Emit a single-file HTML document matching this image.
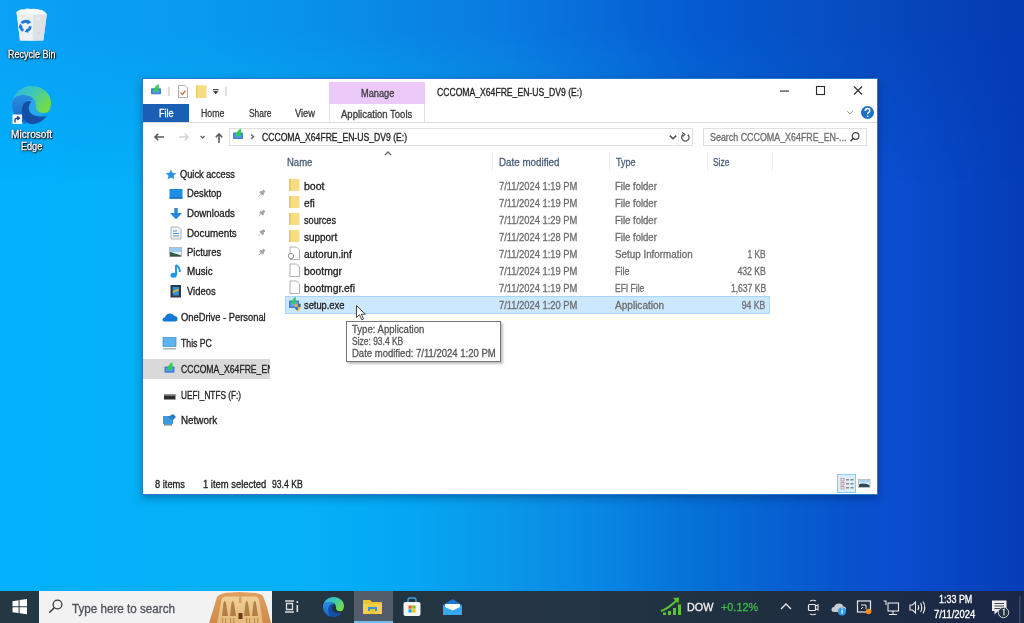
<!DOCTYPE html>
<html><head><meta charset="utf-8">
<style>
*{margin:0;padding:0;box-sizing:border-box}
html,body{width:1024px;height:623px;overflow:hidden}
body{position:relative;font-family:"Liberation Sans",sans-serif;
background:linear-gradient(90deg,#02b0fc 0%,#04b0f8 15%,#06b0f6 29.3%,#03a8f5 39%,#0a98e8 49.2%,#0886e4 58.6%,#0570d6 68.4%,#0852cc 83%,#0a4ed0 87%,#0746c4 93%,#053eb8 99%,#053db8 100%);}
#bgtop{position:absolute;left:0;top:0;width:1024px;height:591px;
background:linear-gradient(90deg,#0aa2f4 0%,#0a9ef3 8.2%,#089bef 19.5%,#0892ea 29.3%,#0a7be0 49.2%,#055ad0 68.4%,#074cc0 83%,#053cb4 98%,#053bb3 100%);
-webkit-mask-image:linear-gradient(180deg,#000 0px,#000 30px,transparent 180px);mask-image:linear-gradient(180deg,#000 0px,#000 30px,transparent 180px)}
.a{position:absolute}
.tx{position:absolute;white-space:nowrap;line-height:1;font-family:"Liberation Sans",sans-serif;-webkit-text-stroke:0.3px currentColor}
svg{position:absolute;overflow:visible}
#win{position:absolute;left:142px;top:78px;width:736px;height:417px;background:#fff;border:1px solid #2a78d0;box-shadow:0 3px 8px rgba(0,20,60,.35)}
#taskbar{position:absolute;left:0;top:591px;width:1024px;height:32px;background:linear-gradient(90deg,#233842 0%,#243442 50%,#223442 61%,#1f2f40 75%,#1d2a44 90%,#1b2748 100%)}
</style></head><body>

<div id="bgtop"></div>
<!-- ============ DESKTOP ICONS ============ -->
<!-- recycle bin -->
<svg style="left:14px;top:6px" width="36" height="38" viewBox="0 0 36 38">
  <path d="M2.5 5.9 L32.8 8.2 L29.3 34.5 L6 34.5 Z" fill="#e6eaee"/>
  <path d="M2.5 5.9 L19.9 8.8 L19.3 34.8 L6 34.5 Z" fill="#eef1f4"/>
  <path d="M19.4 8.8 L32.8 8.2 L29.3 34.5 L18.8 34.8 Z" fill="#dde2e7"/>
  <path d="M2.5 5.9 Q6 2.5 10 3.5 Q13 1.8 17 3 Q22 2 26 3.8 Q30 4 32.8 8.2 L19.4 8.8 Z" fill="#f8f9fa"/>
  <circle cx="9" cy="10" r="1.6" fill="#e2e6ea"/><circle cx="15" cy="12.5" r="1.5" fill="#e4e8ec"/><circle cx="24" cy="13" r="1.8" fill="#e8ecef"/>
  <circle cx="8" cy="28" r="1.2" fill="#e4e8ec"/><circle cx="25" cy="27" r="1.5" fill="#d2d8de"/>
  <g stroke="#1f78d6" stroke-width="2.8" fill="none"><path d="M7.6 17.3 A4.8 4.8 0 0 1 14.6 16.4"/><path d="M16.2 20.3 A4.8 4.8 0 0 1 12.2 24.9"/><path d="M9.4 24.4 A4.8 4.8 0 0 1 6.6 20"/></g>
  <g fill="#1f78d6"><path d="M13.6 13.6 L17.4 16.6 L13.3 18.2 Z"/><path d="M14.6 26.8 L10.6 25.8 L13.2 22.4 Z"/><path d="M4.6 22 L6 17.6 L8.6 20.6 Z"/></g>
</svg>
<!-- edge desktop -->
<svg style="left:12px;top:86px" width="39" height="38" viewBox="0 0 40 40" preserveAspectRatio="none">
  <defs>
    <linearGradient id="eg1" x1="0" y1="0" x2="1" y2="0.6"><stop offset="0" stop-color="#2fb4ea"/><stop offset="0.5" stop-color="#3cc8b8"/><stop offset="1" stop-color="#74dc48"/></linearGradient>
    <linearGradient id="eg2" x1="0" y1="0" x2="0" y2="1"><stop offset="0" stop-color="#2a8ee0"/><stop offset="1" stop-color="#1466c4"/></linearGradient>
  </defs>
  <g id="edgelogo">
  <path d="M0 19 C1 8 10 0 20 0 C32 0 40 9 40 17 C40 23 38 27 36 28 C31 29 26 28 24.5 25 C23.5 22 24 19 22 17 L12 12 Z" fill="url(#eg1)"/>
  <path d="M14 11 C21 10 25 15 24.5 20 C24.3 25 27 28.5 33 29.5 C27 33 21 31 18 27 C15 23 13.5 17 14 11 Z" fill="#2aa6ee"/>
  <path d="M0 19 C0 12 6 9.5 12 9.5 C17 9.5 21 12 21.5 15 C18 14 13.5 15.5 12 19 C10 24 11 32 15 40 C6 37 0 29 0 19 Z" fill="url(#eg2)"/>
  <path d="M12 18.5 C14 15.5 18 15 20 16.5 C16.5 20 16.5 25 19 28.5 C22 32 28 33 35.5 31.5 C32 37 26 40 20 40 C14 40 10.5 34 10.2 28 C10 24 10.5 21 12 18.5 Z" fill="#1650a6"/>
  </g>
</svg>
<svg style="left:12px;top:114px" width="11" height="11" viewBox="0 0 11 11">
  <rect x="0.5" y="0.5" width="9.5" height="9.5" fill="#fff"/>
  <path d="M3 8.5 L3 6 Q3 4.2 5 4.2 L6.5 4.2 M5.2 2.4 L7.4 4.2 L5.2 6" stroke="#1a4a98" stroke-width="1.4" fill="none"/>
</svg>
<!-- ============ WINDOW ============ -->
<div id="win"></div>
<!-- QAT -->
<svg style="left:150px;top:84px" width="80" height="15" viewBox="0 0 80 15">
  <rect x="1" y="4.3" width="10" height="6" rx="0.8" fill="#3f7fd4"/><rect x="2.5" y="6" width="7" height="3" fill="#5a9ae6"/>
  <path d="M3.6 7.5 Q3.8 3 8.6 0 Q9.4 5 7.2 8 Z" fill="#2fcf4a"/>
  <rect x="18.5" y="3" width="0.9" height="9" fill="#b8b8b8"/>
  <path d="M28.5 1.5 L35 1.5 L37.5 4 L37.5 13.5 L28.5 13.5 Z" fill="#fff" stroke="#9a9a9a" stroke-width="0.8"/>
  <path d="M30.5 8.5 L32.5 10.5 L35.5 6.5" stroke="#e27040" stroke-width="1.3" fill="none"/>
  <rect x="46" y="1.3" width="10.5" height="12.7" fill="#f6dc84"/>
  <rect x="46" y="1.3" width="1.5" height="12.7" fill="#eccc66"/>
  <rect x="63" y="5.2" width="5.5" height="1" fill="#222"/>
  <path d="M63 7.2 L68.5 7.2 L65.75 10 Z" fill="#222"/>
  <rect x="75.5" y="3" width="0.9" height="9" fill="#b8b8b8"/>
</svg>
<!-- manage contextual tab -->
<div class="a" style="left:329px;top:82px;width:96px;height:22px;background:#ebc9f8"></div>
<div class="a" style="left:329px;top:104px;width:96px;height:19px;background:#fff;border-left:1px solid #e2e2e2;border-right:1px solid #e2e2e2"></div>
<!-- File tab -->
<div class="a" style="left:143px;top:104px;width:46px;height:18px;background:#1a5fb4"></div>
<!-- ribbon bottom line -->
<div class="a" style="left:143px;top:122px;width:734px;height:1px;background:#dadbdc"></div>
<!-- window controls -->
<svg style="left:776px;top:84px" width="92" height="14" viewBox="0 0 92 14">
  <rect x="4" y="6.5" width="9" height="1.1" fill="#2b2b2b"/>
  <rect x="40.5" y="2.5" width="8" height="8" fill="none" stroke="#2b2b2b" stroke-width="1.1"/>
  <path d="M78 2.5 L86 10.5 M86 2.5 L78 10.5" stroke="#2b2b2b" stroke-width="1.1"/>
</svg>
<!-- chevron + help -->
<svg style="left:845px;top:105px" width="32" height="16" viewBox="0 0 32 16">
  <path d="M2 6 L5 9 L8 6" stroke="#a8a8a8" stroke-width="1" fill="none"/>
  <circle cx="22.5" cy="7.5" r="6.5" fill="#1b6ec9"/>
  <path d="M20.3 6 Q20.3 3.6 22.6 3.6 Q24.8 3.6 24.8 5.6 Q24.8 6.8 23.5 7.5 Q22.6 8 22.6 9.3" stroke="#fff" stroke-width="1.5" fill="none"/>
  <circle cx="22.6" cy="11.3" r="0.9" fill="#fff"/>
</svg>
<!-- nav buttons -->
<svg style="left:150px;top:129px" width="80" height="16" viewBox="0 0 80 16">
  <path d="M5 8 L14 8 M8.2 4.8 L5 8 L8.2 11.2" stroke="#5a5a5a" stroke-width="1.6" fill="none"/>
  <path d="M29 8 L38 8 M34.8 4.8 L38 8 L34.8 11.2" stroke="#d4d4d4" stroke-width="1.6" fill="none"/>
  <path d="M50.6 7 L52.6 9 L54.6 7" stroke="#6a6a6a" stroke-width="1.5" fill="none"/>
  <path d="M69 5 L69 14 M65.8 8.2 L69 5 L72.2 8.2" stroke="#5a5a5a" stroke-width="1.6" fill="none"/>
</svg>
<!-- address box -->
<div class="a" style="left:229px;top:128px;width:464px;height:18px;border:1px solid #e0e0e0"></div>
<div class="a" style="left:678px;top:129px;width:1px;height:16px;background:#ececec"></div>
<svg style="left:232px;top:129px" width="460" height="16" viewBox="0 0 460 16">
  <rect x="1" y="3.6" width="10" height="6.4" rx="0.8" fill="#3f7fd4"/><rect x="2.5" y="5.3" width="7" height="3.2" fill="#5a9ae6"/>
  <path d="M3.8 6.9 Q4 2.4 8.8 -0.6 Q9.6 4.4 7.4 7.4 Z" fill="#2fcf4a"/>
  <path d="M19 5.6 L21.6 7.8 L19 10" stroke="#606060" stroke-width="1.3" fill="none"/>
  <path d="M437.8 6.6 L441 9.8 L444.2 6.6" stroke="#505050" stroke-width="1.5" fill="none"/>
  <path d="M455.8 5.6 A3.7 3.7 0 1 1 451.2 5.4" stroke="#606060" stroke-width="1.4" fill="none"/>
  <path d="M450.2 3.4 L452.8 5.3 L450.6 7.6" stroke="#606060" stroke-width="1.3" fill="none"/>
</svg>
<!-- search box -->
<div class="a" style="left:703px;top:128px;width:164px;height:18px;border:1px solid #e0e0e0"></div>
<svg style="left:849px;top:131px" width="12" height="12" viewBox="0 0 12 12">
  <circle cx="6.6" cy="5" r="3.3" stroke="#404040" stroke-width="1.2" fill="none"/>
  <path d="M4.2 7.5 L1.5 10.3" stroke="#404040" stroke-width="1.5"/>
</svg>
<!-- column separators & sort arrow -->
<div class="a" style="left:492px;top:152px;width:1px;height:19px;background:#ececec"></div>
<div class="a" style="left:609px;top:152px;width:1px;height:19px;background:#ececec"></div>
<div class="a" style="left:707px;top:152px;width:1px;height:19px;background:#ececec"></div>
<div class="a" style="left:772px;top:152px;width:1px;height:19px;background:#ececec"></div>
<svg style="left:383px;top:150px" width="10" height="7" viewBox="0 0 10 7">
  <path d="M2 5 L5 2 L8 5" stroke="#6a6a6a" stroke-width="1.4" fill="none"/>
</svg>

<!-- selected row -->
<div class="a" style="left:285px;top:296px;width:485px;height:18px;background:#cce8ff;border:1px solid #a8d4fa"></div>
<!-- nav selected -->
<div class="a" style="left:143px;top:359px;width:127px;height:20px;background:#d9d9d9"></div>

<!-- file icons -->
<svg style="left:287px;top:177px" width="16" height="140" viewBox="0 0 16 140">
  <g fill="#f8dd86"><rect x="2" y="2" width="10.5" height="12"/><rect x="2" y="19" width="10.5" height="12"/><rect x="2" y="36" width="10.5" height="12"/><rect x="2" y="53" width="10.5" height="12"/></g>
  <g fill="#ecca62"><rect x="2" y="2" width="2" height="12"/><rect x="2" y="19" width="2" height="12"/><rect x="2" y="36" width="2" height="12"/><rect x="2" y="53" width="2" height="12"/></g>
  <g fill="#fff" stroke="#9a9a9a" stroke-width="0.8">
    <path d="M3 70 L9.5 70 L12.5 73 L12.5 82.5 L3 82.5 Z"/>
    <path d="M3 87 L9.5 87 L12.5 90 L12.5 99.5 L3 99.5 Z"/>
    <path d="M3 104 L9.5 104 L12.5 107 L12.5 116.5 L3 116.5 Z"/>
  </g>
  <circle cx="4" cy="79" r="2.6" fill="#fff" stroke="#8a8a8a" stroke-width="0.9"/>
  <g>
    <rect x="2" y="123.5" width="10" height="7.5" rx="0.6" fill="#3f7fd4"/><rect x="3.5" y="125" width="7" height="4.5" fill="#6aa4e8"/>
    <path d="M4.6 126.5 Q4.8 122 8.6 119.5 Q9.6 124 7.8 127 Z" fill="#2fcf4a"/>
    <path d="M7.8 126.8 L13.6 126.8 L13.6 130 Q13.6 132.8 10.7 134 Q7.8 132.8 7.8 130 Z" fill="#e8b830"/>
    <path d="M10.7 126.8 L13.6 126.8 L13.6 130 L10.7 130 Z M7.8 130 L10.7 130 L10.7 134 Q7.8 132.8 7.8 130 Z" fill="#3a6cc0"/>
  </g>
</svg>

<!-- tooltip -->
<div class="a" style="left:346px;top:321px;width:155px;height:41px;background:#fff;border:1px solid #767676;box-shadow:2px 2px 2px rgba(0,0,0,.25)"></div>
<!-- cursor -->
<svg style="left:356px;top:305px" width="12" height="17" viewBox="0 0 12 17">
  <path d="M0.5 0.5 L0.5 12.5 L3.5 9.8 L5.8 14.8 L7.6 14 L5.4 9.2 L9.4 9.2 Z" fill="#fff" stroke="#333" stroke-width="0.9" stroke-linejoin="round"/>
</svg>

<!-- nav icons -->
<svg style="left:160px;top:166px" width="112" height="264" viewBox="0 0 112 264">
  <!-- star (quick access) y~174 -> 8 -->
  <path d="M11 3.5 L12.6 6.9 L16.3 7.2 L13.5 9.7 L14.4 13.3 L11 11.4 L7.6 13.3 L8.5 9.7 L5.7 7.2 L9.4 6.9 Z" fill="#2b8fe0"/>
  <!-- desktop y~193.5 -> 27.5 -->
  <rect x="9.5" y="23" width="13" height="9.5" fill="#1d8fe2"/>
  <rect x="9.5" y="31.5" width="13" height="1.2" fill="#0f67b8"/>
  <!-- downloads 213 -> 47 -->
  <rect x="14.3" y="42" width="3.4" height="6" fill="#2a86dc"/><path d="M10 47 L22 47 L16 53.5 Z" fill="#2a86dc"/>
  <!-- pins -->
  <g fill="#a4a4a4" stroke="#a4a4a4" stroke-width="0.9">
    <path d="M103.5 24 L101.8 25.7 L100.6 25.3 L99.9 26.6 L102.4 29.1 L103.7 28.4 L103.3 27.2 L105 25.5 Z M100.6 28.4 L98.6 30.4"/>
    <path d="M103.5 44 L101.8 45.7 L100.6 45.3 L99.9 46.6 L102.4 49.1 L103.7 48.4 L103.3 47.2 L105 45.5 Z M100.6 48.4 L98.6 50.4"/>
    <path d="M103.5 63.5 L101.8 65.2 L100.6 64.8 L99.9 66.1 L102.4 68.6 L103.7 67.9 L103.3 66.7 L105 65 Z M100.6 67.9 L98.6 69.9"/>
    <path d="M103.5 83 L101.8 84.7 L100.6 84.3 L99.9 85.6 L102.4 88.1 L103.7 87.4 L103.3 86.2 L105 84.5 Z M100.6 87.4 L98.6 89.4"/>
  </g>
  <!-- documents 233 -> 67 -->
  <path d="M11 61 L18.5 61 L21 63.5 L21 73 L11 73 Z" fill="#f4f4f4" stroke="#a0a0a0" stroke-width="0.8"/>
  <path d="M13 65 L17 65 M13 67.5 L19 67.5 M13 70 L19 70" stroke="#3a8ad8" stroke-width="0.9"/>
  <!-- pictures 252 -> 86 -->
  <rect x="9.5" y="81.5" width="12" height="9" fill="#e8eef4" stroke="#9aa4ae" stroke-width="0.7"/>
  <rect x="10" y="82" width="11" height="4" fill="#9ccaf0"/>
  <path d="M10 86 Q14 87 21 89.5 L21 90.5 L10 90.5 Z" fill="#2e5a44"/>
  <!-- music 271 -> 105 -->
  <path d="M16 99 L16 109" stroke="#1e96ee" stroke-width="1.9"/>
  <ellipse cx="13.6" cy="109.2" rx="3.1" ry="2.5" fill="#1e96ee"/>
  <path d="M16 99 Q20 101.5 19.8 106" stroke="#1e96ee" stroke-width="1.9" fill="none"/>
  <!-- videos 291 -> 125 -->
  <rect x="10.5" y="119" width="10.5" height="12.5" fill="#2c3a4a"/>
  <rect x="12.8" y="121" width="6" height="8.5" fill="#3a8fd8"/>
  <path d="M12.8 125 L18.8 122.5 L18.8 124.5 L12.8 127 Z" fill="#d8b040"/>
  <!-- onedrive 317 -> 151 -->
  <path d="M4 155.5 Q2.5 155.5 2.5 153.5 Q2.5 151.5 5 151.3 Q6 147.5 10 147.5 Q13 147.5 14.5 150 Q17.5 150 17.5 153 Q17.5 155.5 15 155.5 Z" fill="#1479d6"/>
  <!-- this pc 342.6 -> 176.6 -->
  <rect x="3" y="171.5" width="13" height="9" fill="#5cb4f0" stroke="#3a8ed0" stroke-width="0.7"/>
  <rect x="3" y="182" width="13" height="1.5" fill="#a8b4c0"/>
  <!-- cccoma 369 -> 203 -->
  <rect x="4.5" y="200.5" width="10" height="6.2" rx="0.8" fill="#3f7fd4"/><rect x="6" y="202.2" width="7" height="3" fill="#5a9ae6"/>
  <path d="M7.3 203.7 Q7.5 199.2 12.3 196.2 Q13.1 201.2 10.9 204.2 Z" fill="#2fcf4a"/>
  <!-- uefi 395 -> 229 -->
  <rect x="4" y="228.5" width="11.5" height="5" fill="#2c2c2c"/>
  <rect x="4" y="228.5" width="11.5" height="1.3" fill="#8a8a8a"/>
  <!-- network 420 -> 254 -->
  <rect x="3" y="250" width="10" height="8" fill="#3c9ae0"/>
  <path d="M8 251 L13 248 L16 251 L13 254 Z" fill="#2a78c8"/>
  <rect x="4" y="258" width="8" height="1.5" fill="#7a8a9a"/>
</svg>

<!-- view buttons -->
<div class="a" style="left:837px;top:474px;width:19px;height:19px;background:#dcefff;border:1px solid #8ccaf6"></div>
<svg style="left:838px;top:475px" width="34" height="17" viewBox="0 0 34 17">
  <g fill="#8a8a8a"><rect x="8" y="4" width="3" height="1.5"/><rect x="12.5" y="4" width="3" height="1.5"/><rect x="8" y="8" width="3" height="1.5"/><rect x="12.5" y="8" width="3" height="1.5"/><rect x="8" y="12" width="3" height="1.5"/><rect x="12.5" y="12" width="3" height="1.5"/></g>
  <g fill="none" stroke="#c88a8a" stroke-width="0.8"><rect x="3" y="3.5" width="3" height="2.5"/><rect x="3" y="7.5" width="3" height="2.5"/><rect x="3" y="11.5" width="3" height="2.5"/></g>
  <rect x="20.5" y="4.5" width="11.5" height="8" fill="#eef2f4" stroke="#a8a8a8" stroke-width="0.7"/>
  <rect x="21" y="5" width="10.5" height="2.5" fill="#a8d4f4"/>
  <path d="M21 9.5 Q24 7.5 31.5 10 L31.5 12 L21 12 Z" fill="#2a4a5a"/>
</svg>

<!-- ============ TASKBAR ============ -->
<div id="taskbar"></div>
<svg style="left:12px;top:599px" width="16" height="16" viewBox="0 0 16 16">
  <path d="M0.5 2.2 L6.6 1.3 L6.6 7.2 L0.5 7.2 Z M7.6 1.1 L15 0 L15 7.2 L7.6 7.2 Z M0.5 8.2 L6.6 8.2 L6.6 14.1 L0.5 13.2 Z M7.6 8.2 L15 8.2 L15 15.3 L7.6 14.3 Z" fill="#fff"/>
</svg>
<div class="a" style="left:39px;top:591px;width:233px;height:32px;background:#f2f2f2"></div>
<svg style="left:47px;top:598px" width="18" height="18" viewBox="0 0 18 18">
  <circle cx="10.5" cy="6.5" r="4.4" stroke="#3a3a3a" stroke-width="1.3" fill="none"/>
  <path d="M7.3 9.7 L2.3 14.7" stroke="#3a3a3a" stroke-width="1.5"/>
</svg>
<!-- abu simbel image -->
<svg style="left:208px;top:591px" width="64" height="32" viewBox="0 0 64 32">
  <defs><linearGradient id="as" x1="0" y1="0" x2="0" y2="1"><stop offset="0" stop-color="#e0a060"/><stop offset="1" stop-color="#d08a4a"/></linearGradient>
  <linearGradient id="as2" x1="0" y1="0" x2="0" y2="1"><stop offset="0" stop-color="#f0d098"/><stop offset="1" stop-color="#e4b878"/></linearGradient></defs>
  <path d="M1 32 L6 16 L9 6 Q12 1.5 24 1.5 Q30 0.5 40 1.5 Q51 1.5 55 5 L59 16 L63 32 Z" fill="url(#as)"/>
  <path d="M9 32 L13.5 9 Q14 5.5 18 5.5 L47 5.5 Q50.5 5.5 51 9 L55 32 Z" fill="url(#as2)"/>
  <g fill="#a8743c" opacity="0.85">
    <path d="M14 25 L15.5 12 Q16.5 8 18 12 L20 25 Z"/><path d="M22 25 L23.5 12 Q24.8 8 26 12 L28 25 Z"/>
    <path d="M36 25 L37.5 12 Q38.8 8 40 12 L42 25 Z"/><path d="M44 25 L45.5 12 Q46.8 8 48 12 L50 25 Z"/>
  </g>
  <g fill="#b88040" opacity="0.7"><rect x="14" y="27" width="1.2" height="5"/><rect x="17" y="27" width="1.2" height="5"/><rect x="22" y="27" width="1.2" height="5"/><rect x="25" y="27" width="1.2" height="5"/><rect x="38" y="27" width="1.2" height="5"/><rect x="41" y="27" width="1.2" height="5"/><rect x="46" y="27" width="1.2" height="5"/><rect x="49" y="27" width="1.2" height="5"/></g>
  <rect x="30.5" y="22" width="4" height="6" fill="#6a3a18"/>
  <path d="M31 5.5 L33.5 5.5 L33.5 12 L31 12 Z" fill="#c89050" opacity="0.7"/>
</svg>
<!-- task view -->
<svg style="left:283px;top:599px" width="18" height="16" viewBox="0 0 18 16">
  <path d="M2 2 L11 2 M2 13 L11 13 M3.5 4.5 L9.5 4.5 L9.5 10.5 L3.5 10.5 Z" stroke="#dcdcdc" stroke-width="1.3" fill="none"/>
  <rect x="13.5" y="2" width="1.6" height="2" fill="#dcdcdc"/><rect x="13.5" y="6" width="1.6" height="7" fill="#dcdcdc"/>
</svg>
<!-- edge taskbar -->
<svg style="left:323px;top:597px" width="21" height="20" viewBox="0 0 40 40" preserveAspectRatio="none">
  <path d="M0 19 C1 8 10 0 20 0 C32 0 40 9 40 17 C40 23 38 27 36 28 C31 29 26 28 24.5 25 C23.5 22 24 19 22 17 L12 12 Z" fill="url(#eg1)"/>
  <path d="M14 11 C21 10 25 15 24.5 20 C24.3 25 27 28.5 33 29.5 C27 33 21 31 18 27 C15 23 13.5 17 14 11 Z" fill="#233442"/>
  <path d="M0 19 C0 12 6 9.5 12 9.5 C17 9.5 21 12 21.5 15 C18 14 13.5 15.5 12 19 C10 24 11 32 15 40 C6 37 0 29 0 19 Z" fill="url(#eg2)"/>
  <path d="M12 18.5 C14 15.5 18 15 20 16.5 C16.5 20 16.5 25 19 28.5 C22 32 28 33 35.5 31.5 C32 37 26 40 20 40 C14 40 10.5 34 10.2 28 C10 24 10.5 21 12 18.5 Z" fill="#1650a6"/>
</svg>
<!-- explorer active -->
<div class="a" style="left:354px;top:591px;width:39px;height:32px;background:#525d69"></div>
<div class="a" style="left:354px;top:621px;width:39px;height:2px;background:#76b9ed"></div>
<svg style="left:362px;top:599px" width="22" height="16" viewBox="0 0 22 16">
  <path d="M1 1 L8 1 L10 3 L20 3 L20 15 L1 15 Z" fill="#f0c23a"/>
  <rect x="1" y="5" width="19" height="10" fill="#f8d04a"/>
  <rect x="6" y="8" width="9" height="4" fill="#3a8ee0"/>
  <rect x="8" y="10" width="5" height="5" fill="#f0c23a"/>
</svg>
<!-- store -->
<svg style="left:402px;top:597px" width="20" height="20" viewBox="0 0 20 20">
  <path d="M6 5 L6 3 Q6 1 8 1 L12 1 Q14 1 14 3 L14 5" stroke="#3aa0e8" stroke-width="1.4" fill="none"/>
  <rect x="1.5" y="5" width="17" height="14" rx="2" fill="#f4f4f4"/>
  <rect x="6.5" y="8.5" width="3.2" height="3.2" fill="#f25022"/><rect x="10.3" y="8.5" width="3.2" height="3.2" fill="#7fba00"/>
  <rect x="6.5" y="12.3" width="3.2" height="3.2" fill="#00a4ef"/><rect x="10.3" y="12.3" width="3.2" height="3.2" fill="#ffb900"/>
</svg>
<!-- mail -->
<svg style="left:442px;top:598px" width="21" height="18" viewBox="0 0 21 18">
  <path d="M1 7 L10.5 1 L20 7 L20 17 L1 17 Z" fill="#1a78d4"/>
  <path d="M1 7 L10.5 12 L20 7 L20 17 L1 17 Z" fill="#34a8f0"/>
  <path d="M3 6 L18 6 L18 9 L10.5 12.5 L3 9 Z" fill="#fff"/>
</svg>
<!-- stock widget -->
<svg style="left:660px;top:596px" width="22" height="20" viewBox="0 0 22 20">
  <path d="M1 15 Q8 13 18 3" stroke="#5cc42e" stroke-width="2" fill="none"/>
  <path d="M13 2 L19 1.5 L18.5 7.5 Z" fill="#5cc42e"/>
  <rect x="3" y="16.5" width="3" height="2.5" fill="#5cc42e"/><rect x="8" y="15" width="3" height="4" fill="#5cc42e"/>
  <rect x="13" y="12" width="3" height="7" fill="#5cc42e"/><rect x="18" y="8.5" width="3" height="10.5" fill="#5cc42e"/>
</svg>
<!-- tray -->
<svg style="left:776px;top:596px" width="248" height="27" viewBox="0 0 248 27">
  <path d="M5 13 L10 8 L15 13" stroke="#e8e8e8" stroke-width="1.3" fill="none"/>
  <!-- meet -->
  <path d="M34 5 Q37 3.5 40 5 M34 18 Q37 19.5 40 18" stroke="#dcdcdc" stroke-width="1.1" fill="none"/>
  <rect x="32.5" y="8.5" width="7" height="6" rx="1" stroke="#e8e8e8" stroke-width="1.2" fill="none"/>
  <path d="M39.5 10 L42 8.8 L42 14 L39.5 12.8" stroke="#e8e8e8" stroke-width="1.1" fill="none"/>
  <!-- onedrive -->
  <path d="M58 16 Q55.5 16 55.5 13.5 Q55.5 11 58 11 Q59 7.5 63 7.5 Q66.5 7.5 67.5 10.5 Q70 10.5 70 13 Q70 16 67 16 Z" fill="#c8ccd0"/>
  <circle cx="66" cy="15.5" r="4" fill="#2a9ae8"/>
  <rect x="65.5" y="14" width="1.2" height="3.8" fill="#fff"/><rect x="65.5" y="12.3" width="1.2" height="1" fill="#fff"/>
  <!-- security / presentation -->
  <rect x="81.5" y="5" width="13" height="11" stroke="#e8e8e8" stroke-width="1.2" fill="none"/>
  <path d="M85 9 L90 9 L90 13 M85 13 L87 11" stroke="#e8e8e8" stroke-width="1" fill="none"/>
  <circle cx="92.5" cy="15.5" r="2.8" fill="#f7901e"/>
  <!-- network -->
  <rect x="112" y="7" width="10.5" height="8" stroke="#e8e8e8" stroke-width="1.1" fill="none"/>
  <path d="M117 15 L117 18 M113 18.5 L121 18.5 M107.5 5 L110 5 L110 9" stroke="#e8e8e8" stroke-width="1.1" fill="none"/>
  <!-- volume -->
  <path d="M134 9 L136.5 9 L139.5 6 L139.5 17 L136.5 14 L134 14 Z" stroke="#e8e8e8" stroke-width="1.1" fill="none"/>
  <path d="M142 9 Q143.5 11.5 142 14 M144.5 7 Q147 11.5 144.5 16 M147 5.5 Q150.5 11.5 147 17.5" stroke="#e8e8e8" stroke-width="1.1" fill="none"/>
  <!-- notification -->
  <path d="M216 4.5 L230.5 4.5 L230.5 15 L222 15 L218.5 18.5 L218.5 15 L216 15 Z" fill="#f0f0f0"/>
  <path d="M218.5 7.5 L228 7.5 M218.5 10 L228 10 M218.5 12.5 L225 12.5" stroke="#233341" stroke-width="0.9"/>
  <circle cx="227.5" cy="16.5" r="5.2" fill="#233341" stroke="#d0d0d0" stroke-width="1"/>
  <path d="M226.8 14 L228 13.2 L228 19.5" stroke="#f0f0f0" stroke-width="1.1" fill="none"/>
  <rect x="243.5" y="0" width="0.8" height="27" fill="#5a6672"/>
</svg>

<div class="tx" style="left:8.10px;top:49.91px;font-size:10px;color:#fff;transform:scaleX(0.8994);transform-origin:left;text-shadow:0 0 1px #000,0 0 2px rgba(0,0,0,.9),1px 1px 1px #000,0 1px 3px rgba(0,0,0,.6);">Recycle Bin</div>
<div class="tx" style="left:10.90px;top:129.92px;font-size:10px;color:#fff;transform:scaleX(1.0133);transform-origin:left;text-shadow:0 0 1px #000,0 0 2px rgba(0,0,0,.9),1px 1px 1px #000,0 1px 3px rgba(0,0,0,.6);">Microsoft</div>
<div class="tx" style="left:20.50px;top:141.52px;font-size:10px;color:#fff;transform:scaleX(0.9076);transform-origin:left;text-shadow:0 0 1px #000,0 0 2px rgba(0,0,0,.9),1px 1px 1px #000,0 1px 3px rgba(0,0,0,.6);">Edge</div>
<div class="tx" style="left:360.50px;top:88.91px;font-size:10px;color:#3b3b3b;transform:scaleX(0.9242);transform-origin:left;">Manage</div>
<div class="tx" style="left:436.70px;top:88.11px;font-size:10px;color:#1e1e1e;transform:scaleX(0.8612);transform-origin:left;">CCCOMA_X64FRE_EN-US_DV9 (E:)</div>
<div class="tx" style="left:158.60px;top:109.41px;font-size:10px;color:#ffffff;transform:scaleX(0.9116);transform-origin:left;">File</div>
<div class="tx" style="left:200.60px;top:109.41px;font-size:10px;color:#3b3b3b;transform:scaleX(0.8768);transform-origin:left;">Home</div>
<div class="tx" style="left:248.50px;top:109.41px;font-size:10px;color:#3b3b3b;transform:scaleX(0.8431);transform-origin:left;">Share</div>
<div class="tx" style="left:295.00px;top:109.41px;font-size:10px;color:#3b3b3b;transform:scaleX(0.9302);transform-origin:left;">View</div>
<div class="tx" style="left:341.00px;top:109.51px;font-size:10px;color:#3b3b3b;transform:scaleX(0.9523);transform-origin:left;">Application Tools</div>
<div class="tx" style="left:262.00px;top:132.92px;font-size:10px;color:#1e1e1e;transform:scaleX(0.8612);transform-origin:left;">CCCOMA_X64FRE_EN-US_DV9 (E:)</div>
<div class="tx" style="left:710.20px;top:132.92px;font-size:10px;color:#6d6d6d;transform:scaleX(0.8892);transform-origin:left;">Search CCCOMA_X64FRE_EN-...</div>
<div class="tx" style="left:287.40px;top:157.92px;font-size:10px;color:#4c607a;transform:scaleX(0.9518);transform-origin:left;">Name</div>
<div class="tx" style="left:498.70px;top:157.92px;font-size:10px;color:#4c607a;transform:scaleX(0.9805);transform-origin:left;">Date modified</div>
<div class="tx" style="left:615.50px;top:157.92px;font-size:10px;color:#4c607a;transform:scaleX(0.8991);transform-origin:left;">Type</div>
<div class="tx" style="left:712.90px;top:157.92px;font-size:10px;color:#4c607a;transform:scaleX(0.8379);transform-origin:left;">Size</div>
<div class="tx" style="left:180.00px;top:169.92px;font-size:10px;color:#1e1e1e;transform:scaleX(0.9249);transform-origin:left;">Quick access</div>
<div class="tx" style="left:186.70px;top:189.42px;font-size:10px;color:#1e1e1e;transform:scaleX(0.9431);transform-origin:left;">Desktop</div>
<div class="tx" style="left:186.70px;top:209.22px;font-size:10px;color:#1e1e1e;transform:scaleX(0.9680);transform-origin:left;">Downloads</div>
<div class="tx" style="left:186.70px;top:228.72px;font-size:10px;color:#1e1e1e;transform:scaleX(0.9846);transform-origin:left;">Documents</div>
<div class="tx" style="left:186.70px;top:247.92px;font-size:10px;color:#1e1e1e;transform:scaleX(0.9467);transform-origin:left;">Pictures</div>
<div class="tx" style="left:186.70px;top:267.22px;font-size:10px;color:#1e1e1e;transform:scaleX(0.9837);transform-origin:left;">Music</div>
<div class="tx" style="left:186.70px;top:286.72px;font-size:10px;color:#1e1e1e;transform:scaleX(0.9406);transform-origin:left;">Videos</div>
<div class="tx" style="left:180.50px;top:313.02px;font-size:10px;color:#1e1e1e;transform:scaleX(0.9349);transform-origin:left;">OneDrive - Personal</div>
<div class="tx" style="left:180.50px;top:338.52px;font-size:10px;color:#1e1e1e;transform:scaleX(0.8689);transform-origin:left;">This PC</div>
<div class="a" style="left:143px;top:355px;width:126.5px;height:25px;overflow:hidden"><div class="tx" style="left:37.50px;top:9.62px;font-size:10px;color:#1e1e1e;transform:scaleX(0.8612);transform-origin:left;">CCCOMA_X64FRE_EN-US_DV9 (E:)</div></div>
<div class="tx" style="left:180.50px;top:391.12px;font-size:10px;color:#1e1e1e;transform:scaleX(0.8258);transform-origin:left;">UEFI_NTFS (F:)</div>
<div class="tx" style="left:180.50px;top:416.12px;font-size:10px;color:#1e1e1e;transform:scaleX(0.9840);transform-origin:left;">Network</div>
<div class="tx" style="left:304.30px;top:181.52px;font-size:10px;color:#1e1e1e;transform:scaleX(1.0530);transform-origin:left;">boot</div>
<div class="tx" style="left:498.90px;top:181.52px;font-size:10px;color:#6d6d6d;transform:scaleX(0.9348);transform-origin:left;">7/11/2024 1:19 PM</div>
<div class="tx" style="left:615.40px;top:181.52px;font-size:10px;color:#6d6d6d;transform:scaleX(0.9520);transform-origin:left;">File folder</div>
<div class="tx" style="left:304.30px;top:198.52px;font-size:10px;color:#1e1e1e;transform:scaleX(1.0225);transform-origin:left;">efi</div>
<div class="tx" style="left:498.90px;top:198.52px;font-size:10px;color:#6d6d6d;transform:scaleX(0.9348);transform-origin:left;">7/11/2024 1:19 PM</div>
<div class="tx" style="left:615.40px;top:198.52px;font-size:10px;color:#6d6d6d;transform:scaleX(0.9520);transform-origin:left;">File folder</div>
<div class="tx" style="left:304.30px;top:215.52px;font-size:10px;color:#1e1e1e;transform:scaleX(0.9139);transform-origin:left;">sources</div>
<div class="tx" style="left:498.90px;top:215.52px;font-size:10px;color:#6d6d6d;transform:scaleX(0.9348);transform-origin:left;">7/11/2024 1:29 PM</div>
<div class="tx" style="left:615.40px;top:215.52px;font-size:10px;color:#6d6d6d;transform:scaleX(0.9520);transform-origin:left;">File folder</div>
<div class="tx" style="left:304.30px;top:232.52px;font-size:10px;color:#1e1e1e;transform:scaleX(0.9952);transform-origin:left;">support</div>
<div class="tx" style="left:498.90px;top:232.52px;font-size:10px;color:#6d6d6d;transform:scaleX(0.9348);transform-origin:left;">7/11/2024 1:28 PM</div>
<div class="tx" style="left:615.40px;top:232.52px;font-size:10px;color:#6d6d6d;transform:scaleX(0.9520);transform-origin:left;">File folder</div>
<div class="tx" style="left:304.30px;top:249.52px;font-size:10px;color:#1e1e1e;transform:scaleX(1.0092);transform-origin:left;">autorun.inf</div>
<div class="tx" style="left:498.90px;top:249.52px;font-size:10px;color:#6d6d6d;transform:scaleX(0.9348);transform-origin:left;">7/11/2024 1:19 PM</div>
<div class="tx" style="left:615.40px;top:249.52px;font-size:10px;color:#6d6d6d;transform:scaleX(0.9831);transform-origin:left;">Setup Information</div>
<div class="tx" style="left:744.01px;top:249.52px;font-size:10px;color:#6d6d6d;transform:scaleX(0.8392);transform-origin:right;">1 KB</div>
<div class="tx" style="left:304.30px;top:266.52px;font-size:10px;color:#1e1e1e;transform:scaleX(1.0358);transform-origin:left;">bootmgr</div>
<div class="tx" style="left:498.90px;top:266.52px;font-size:10px;color:#6d6d6d;transform:scaleX(0.9348);transform-origin:left;">7/11/2024 1:19 PM</div>
<div class="tx" style="left:615.40px;top:266.52px;font-size:10px;color:#6d6d6d;transform:scaleX(0.9054);transform-origin:left;">File</div>
<div class="tx" style="left:732.89px;top:266.52px;font-size:10px;color:#6d6d6d;transform:scaleX(0.8655);transform-origin:right;">432 KB</div>
<div class="tx" style="left:304.30px;top:283.52px;font-size:10px;color:#1e1e1e;transform:scaleX(1.0306);transform-origin:left;">bootmgr.efi</div>
<div class="tx" style="left:498.90px;top:283.52px;font-size:10px;color:#6d6d6d;transform:scaleX(0.9348);transform-origin:left;">7/11/2024 1:19 PM</div>
<div class="tx" style="left:615.40px;top:283.52px;font-size:10px;color:#6d6d6d;transform:scaleX(0.8504);transform-origin:left;">EFI File</div>
<div class="tx" style="left:724.54px;top:283.52px;font-size:10px;color:#6d6d6d;transform:scaleX(0.8553);transform-origin:right;">1,637 KB</div>
<div class="tx" style="left:304.30px;top:300.52px;font-size:10px;color:#1e1e1e;transform:scaleX(0.9314);transform-origin:left;">setup.exe</div>
<div class="tx" style="left:498.90px;top:300.52px;font-size:10px;color:#6d6d6d;transform:scaleX(0.9348);transform-origin:left;">7/11/2024 1:20 PM</div>
<div class="tx" style="left:615.40px;top:300.52px;font-size:10px;color:#6d6d6d;transform:scaleX(1.0057);transform-origin:left;">Application</div>
<div class="tx" style="left:738.45px;top:300.52px;font-size:10px;color:#6d6d6d;transform:scaleX(0.8624);transform-origin:right;">94 KB</div>
<div class="tx" style="left:351.60px;top:325.42px;font-size:10px;color:#575757;transform:scaleX(0.9562);transform-origin:left;">Type: Application</div>
<div class="tx" style="left:351.60px;top:337.42px;font-size:10px;color:#575757;transform:scaleX(0.8450);transform-origin:left;">Size: 93.4 KB</div>
<div class="tx" style="left:351.60px;top:349.42px;font-size:10px;color:#575757;transform:scaleX(0.9515);transform-origin:left;">Date modified: 7/11/2024 1:20 PM</div>
<div class="tx" style="left:155.10px;top:480.31px;font-size:10px;color:#1e1e1e;transform:scaleX(0.9307);transform-origin:left;">8 items</div>
<div class="tx" style="left:203.20px;top:480.31px;font-size:10px;color:#1e1e1e;transform:scaleX(0.9410);transform-origin:left;">1 item selected</div>
<div class="tx" style="left:271.50px;top:480.31px;font-size:10px;color:#1e1e1e;transform:scaleX(0.8625);transform-origin:left;">93.4 KB</div>
<div class="tx" style="left:72.20px;top:602.54px;font-size:12px;color:#4e5258;transform:scaleX(0.9711);transform-origin:left;">Type here to search</div>
<div class="tx" style="left:687.10px;top:602.43px;font-size:11px;color:#f0f0f0;transform:scaleX(0.9818);transform-origin:left;">DOW</div>
<div class="tx" style="left:721.30px;top:602.43px;font-size:11px;color:#3fb94a;transform:scaleX(0.9860);transform-origin:left;">+0.12%</div>
<div class="tx" style="left:938.80px;top:595.12px;font-size:10px;color:#ffffff;transform:scaleX(0.8940);transform-origin:left;">1:33 PM</div>
<div class="tx" style="left:934.30px;top:610.12px;font-size:10px;color:#ffffff;transform:scaleX(0.9440);transform-origin:left;">7/11/2024</div>
</body></html>
